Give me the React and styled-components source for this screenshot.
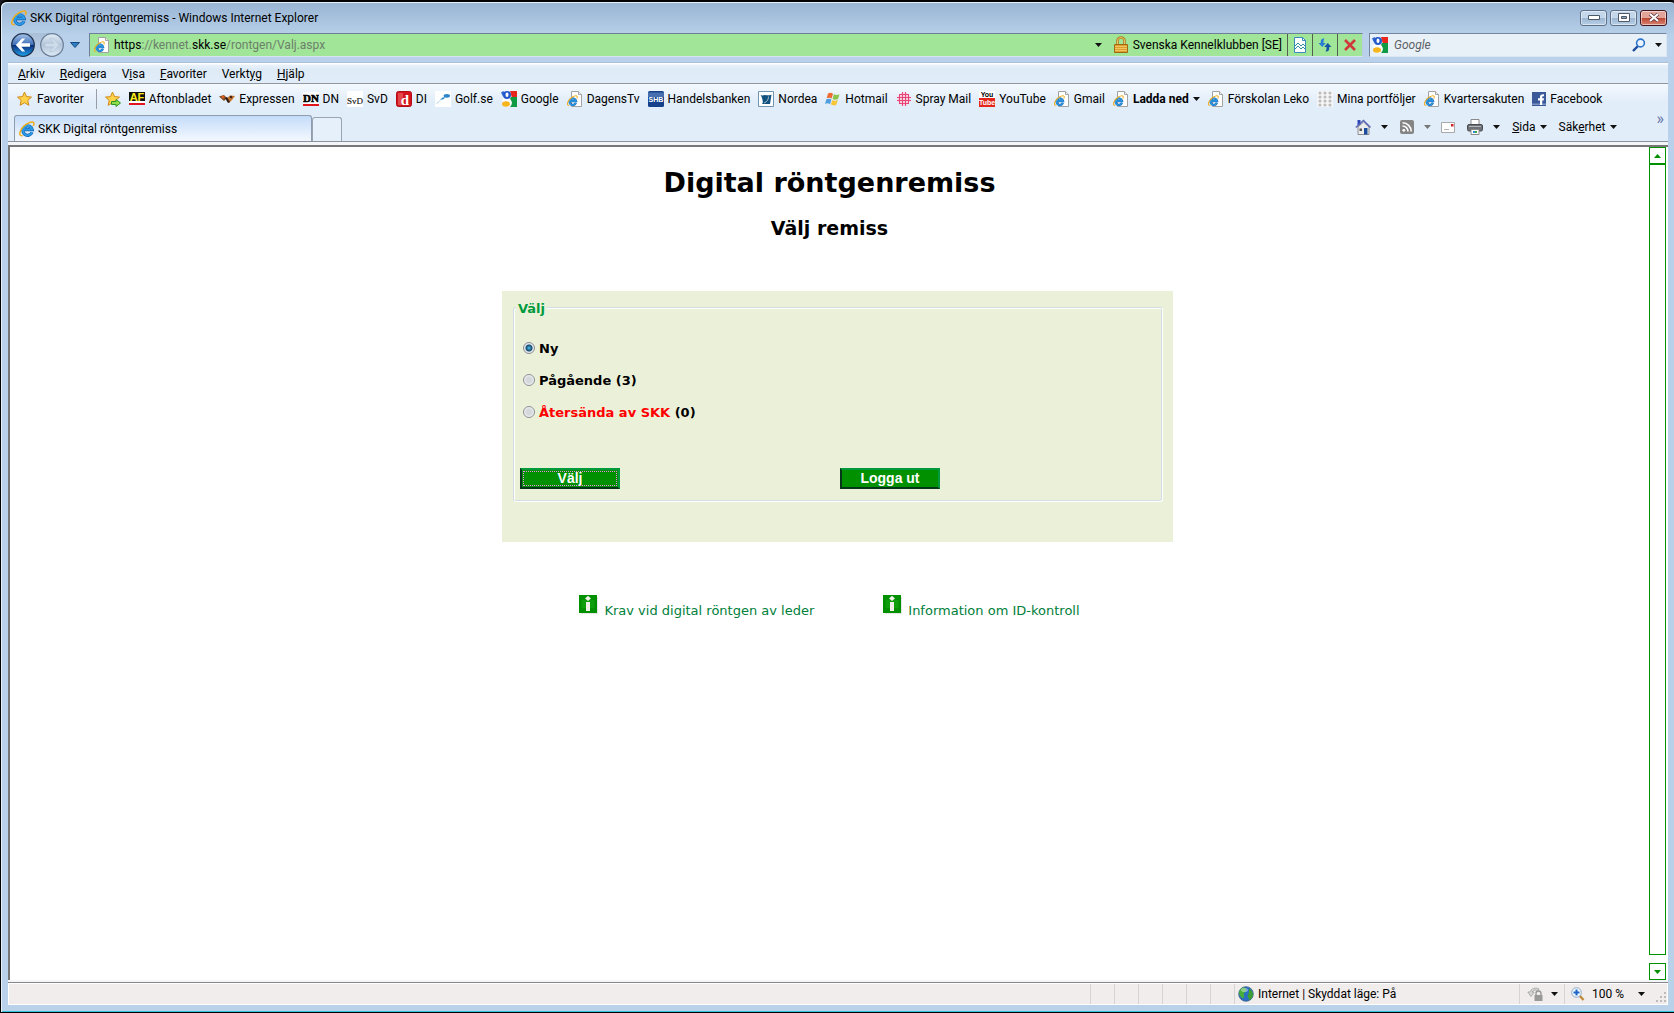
import { useState } from "react";
import styled, { createGlobalStyle } from "styled-components";

const GlobalStyle = createGlobalStyle`
  *, *::before, *::after {
    box-sizing: border-box;
  }
  body {
    margin: 0;
    background: #1c1a22;
    font-family: "Segoe UI", Roboto, "Open Sans", sans-serif;
    font-size: 12px;
    line-height: 16px;
    color: #000;
  }
  button, input {
    font: inherit;
    color: inherit;
    margin: 0;
  }
  svg {
    display: block;
    flex: none;
  }
`;

/* ---------- window frame ---------- */

const Window = styled.div`
  display: flex;
  flex-direction: column;
  min-height: 100vh;
  padding: 1px 6px 7px 7px;
  border: solid #000;
  border-width: 2px 0 1px 1px;
  border-top-left-radius: 7px;
  border-top-right-radius: 4px;
  background: linear-gradient(#98b4d3, #b9d1ea 34px, #bad1ea);
  box-shadow: inset 1px 1px 0 #e6f0fa, inset 0 -1px 0 #35c0dc;
`;

const TitleBar = styled.header`
  display: flex;
  align-items: center;
  height: 27px;
  padding: 2px 1px 0 3px;
  gap: 3px;
`;

const Title = styled.span`
  flex: 1;
`;

const WindowButtons = styled.div`
  display: flex;
  align-items: center;
  gap: 3px;
`;

const WindowButton = styled.button`
  display: flex;
  align-items: center;
  justify-content: center;
  width: 27px;
  height: 16px;
  padding: 0;
  border: 1px solid ${(p) => (p.$close ? "#43141c" : "#5c7089")};
  border-radius: 3px;
  box-shadow: inset 0 0 0 1px rgba(255, 255, 255, 0.5);
  background: ${(p) =>
    p.$close
      ? "linear-gradient(#e2a398 50%, #bb4530 50%, #d98572)"
      : "linear-gradient(#c5d7ea 50%, #9db6d1 50%, #b7cfe6)"};
`;

/* ---------- navigation row ---------- */

const NavRow = styled.nav`
  display: flex;
  align-items: center;
  height: 32px;
  padding: 0 1px 3px 3px;
`;

const NavPill = styled.div`
  display: flex;
  gap: 5px;
  border-radius: 13px;
  background: linear-gradient(#a9bfd8, #c5d7ea);
`;

const IconButton = styled.button`
  display: flex;
  align-items: center;
  justify-content: center;
  padding: 0;
  border: 0;
  background: none;
  width: ${(p) => p.$width || 24}px;
`;

const AddressBar = styled.div`
  display: flex;
  flex: 1;
  align-items: stretch;
  height: 24px;
  margin-left: 3px;
  border: 1px solid #6d8097;
  border-right-color: #b9cce0;
  border-bottom-color: #d5e3f2;
  background: #a1e599;
`;

const Url = styled.div`
  display: flex;
  flex: 1;
  align-items: center;
  gap: 4px;
  padding-left: 4px;
  color: #6c7f69;

  b {
    font-weight: 400;
    color: #000;
  }
`;

const Certificate = styled.button`
  display: flex;
  align-items: center;
  gap: 5px;
  padding: 0 5px 0 7px;
  border: 0;
  background: none;
`;

const AddressAction = styled.button`
  display: flex;
  align-items: center;
  justify-content: center;
  width: 25px;
  padding: 0;
  border: 0;
  border-left: 1px solid #53604f;
  background: none;
`;

const SearchBox = styled.div`
  display: flex;
  align-items: center;
  width: 298px;
  height: 24px;
  margin-left: 6px;
  padding-left: 2px;
  border: 1px solid #73869d;
  border-right-color: #dbe7f3;
  border-bottom-color: #dbe7f3;
  background: #e8f0f8;
`;

const SearchInput = styled.input`
  flex: 1;
  min-width: 0;
  padding: 0 0 0 6px;
  border: 0;
  outline: 0;
  background: none;
  font-style: italic;

  &::placeholder {
    color: #5d6166;
    opacity: 1;
  }
`;

/* ---------- menu, favourites and tabs ---------- */

const MenuBar = styled.div`
  display: flex;
  align-items: center;
  height: 22px;
  padding: 2px 10px 0;
  gap: 15px;
  border-top: 1px solid #a9c0d9;
  border-bottom: 1px solid #9097a0;
  background: linear-gradient(#fff 1px, #e9f2fb 2px, #deebf7 6px, #e1edf9);
`;

const MenuButton = styled.button`
  display: flex;
  align-items: center;
  gap: 4px;
  padding: 0;
  border: 0;
  background: none;
  white-space: pre;
`;

const Tools = styled.div`
  background: linear-gradient(#f4f9fe, #e1edf9 18px);
`;

const FavoritesBar = styled.div`
  display: flex;
  align-items: center;
  height: 31px;
  padding: 0 0 2px 9px;
  gap: 8px;
  white-space: nowrap;
`;

const FavoritesButton = styled(MenuButton)`
  height: 20px;
  padding-right: 12px;
  border-right: 1px solid #999ea6;
`;

const Bookmark = styled.a`
  display: flex;
  align-items: center;
  gap: 4px;
  color: #000;
  font-weight: ${(p) => (p.$bold ? 700 : 400)};
  text-decoration: none;
`;

const TabRow = styled.div`
  display: flex;
  align-items: flex-end;
  height: 27px;
  padding-left: 6px;
  border-bottom: 1px solid #8c93a0;
`;

const Tab = styled.button`
  display: flex;
  align-items: center;
  gap: 3px;
  width: 298px;
  height: 26px;
  padding: 0 4px;
  border: 1px solid #8f9cad;
  border-bottom: 0;
  border-radius: 3px 3px 0 0;
  background: linear-gradient(#c4dcf9, #f4f8fe);
`;

const NewTab = styled.button`
  width: 30px;
  height: 24px;
  padding: 0;
  border: 1px solid #9aa5b3;
  border-bottom: 0;
  border-radius: 3px 3px 0 0;
  background: #e6f0fa;
`;

const CommandBar = styled.div`
  display: flex;
  flex: 1;
  align-items: center;
  justify-content: flex-end;
  height: 26px;
  padding: 0 4px 2px 0;
`;

const CommandGroup = styled.div`
  display: flex;
  align-items: center;
  gap: 10px;
  padding-right: ${(p) => p.$after || 0}px;
`;

const Overflow = styled.button`
  align-self: flex-start;
  padding: 0;
  border: 0;
  background: none;
  color: #6470a8;
  font-size: 16px;
  line-height: 8px;
`;

/* ---------- page ---------- */

const Content = styled.div`
  display: flex;
  flex: 1;
  padding: 3px 0;
  background: #f3f5f9;
`;

const Viewport = styled.main`
  display: flex;
  flex: 1;
  border: solid #777;
  border-width: 2px 0 0 2px;
  background: #fff;
`;

const Page = styled.div`
  display: flex;
  flex: 1;
  flex-direction: column;
  align-items: center;
  font-family: Verdana, "DejaVu Sans", sans-serif;
  font-size: 13px;
`;

const PageTitle = styled.h1`
  margin: 19px 0 0;
  font-size: 27px;
  line-height: 34px;
`;

const PageSubtitle = styled.h2`
  margin: 16px 0 0;
  font-size: 19px;
  line-height: 24px;
`;

const Form = styled.form`
  width: 671px;
  height: 251px;
  margin: 51px 0 0 16px;
  padding: 7px 10px 0 11px;
  background: #ebf1d9;
`;

const Group = styled.fieldset`
  height: 204px;
  margin: 0;
  padding: 0 6px;
  border: 1px solid;
  border-color: #d3dce6 #fff #fff #d3dce6;
  border-radius: 3px;
  box-shadow: inset 1px 1px 0 #fff, inset -1px -1px 0 #d3dce6;
  font-weight: 700;
`;

const Legend = styled.legend`
  margin-left: -4px;
  padding: 3px 2px 0;
  background: #ebf1d9;
  line-height: 16px;
  color: #009a3d;
`;

const Choice = styled.label`
  display: flex;
  align-items: center;
  gap: 4px;
  height: 32px;
  padding-left: 3px;
`;

const Choices = styled.div`
  padding-top: 16px;
`;

const Radio = styled.input`
  appearance: none;
  width: 12px;
  height: 12px;
  margin-bottom: 3px;
  border: 1px solid #8a8f94;
  border-radius: 50%;
  background: radial-gradient(#d5d8dc 40%, #f7f7f7 75%);

  &:checked {
    background: radial-gradient(circle at 50% 50%, #4fc0ea 0, #14486e 3px, #e4e8ec 4px);
  }
`;

const Warn = styled.span`
  color: #f00;
`;

const Buttons = styled.div`
  display: flex;
  gap: 220px;
  padding-top: 39px;
`;

const GreenButton = styled.button`
  width: 100px;
  height: 21px;
  padding: 0;
  border: 2px solid;
  border-color: #009a3d #009a3d #04371a #04371a;
  background: #009000;
  color: #fff;
  font: 700 14px/17px Arial, "Liberation Sans", sans-serif;
  outline: ${(p) => (p.$focused ? "1px dotted #e58be5" : "0")};
  outline-offset: -4px;
`;

const Links = styled.div`
  display: flex;
  gap: 69px;
  margin-top: 53px;
`;

const InfoLink = styled.a`
  display: flex;
  gap: 6px;
  color: #00803a;
  line-height: 32px;
  text-decoration: none;
`;

const ScrollBar = styled.div`
  display: flex;
  flex-direction: column;
  width: 17px;
  margin-right: 2px;
`;

const ScrollButton = styled.button`
  display: flex;
  align-items: center;
  justify-content: center;
  height: 17px;
  padding: 0;
  border: 1px solid #009000;
  background: #fff;
`;

const ScrollThumb = styled.div`
  flex: 1;
  margin-bottom: 8px;
  border: 1px solid #009000;
`;

/* ---------- status bar ---------- */

const StatusBar = styled.footer`
  display: flex;
  justify-content: flex-end;
  height: 22px;
  border: 1px solid #fff;
  background: #f0edec;
  box-shadow: 0 -1px 0 #86868a;
`;

const StatusCell = styled.div`
  display: flex;
  align-items: center;
  width: ${(p) => p.$width || 24}px;
  padding-left: 3px;
  gap: 4px;
  border-left: 1px solid #d6d3d2;
`;

const StatusText = styled.span`
  flex: 1;
`;

/* ---------- icons ---------- */

const Arrow = ({ color = "#111", up }) => (
  <svg width="7" height="4" viewBox="0 0 7 4">
    <path d={up ? "M0 4h7L3.500 0z" : "M0 0h7L3.500 4z"} fill={color} />
  </svg>
);

const ELogo = () => (
  <>
    <path
      d="M13 11.200A4.700 4.700 0 1 1 13.200 8.600H5"
      fill="none"
      stroke="#1560ad"
      strokeWidth="3.200"
    />
    <path
      d="M13 11.200A4.700 4.700 0 1 1 13.200 8.600H5"
      fill="none"
      stroke="#2b9ae6"
      strokeWidth="2"
    />
    <path
      d="M3.600 14.600C-1.500 15.800.8 7.500 7.500 3.200 12.500 0 16.500 0 14.300 5"
      fill="none"
      stroke="#f0ad1c"
      strokeWidth="1.500"
    />
  </>
);

const IeIcon = () => (
  <svg width="16" height="16" viewBox="0 0 16 16">
    <ELogo />
  </svg>
);

const IePageIcon = () => (
  <svg width="16" height="16" viewBox="0 0 16 16">
    <path d="M4.500.5h7l3 3v12h-10z" fill="#fff" stroke="#a2a2a2" />
    <path d="M11.500.5v3h3" fill="#eee" stroke="#a2a2a2" />
    <g transform="translate(-.2 4) scale(.7)">
      <ELogo />
    </g>
  </svg>
);

const BackIcon = () => (
  <svg width="24" height="24" viewBox="0 0 24 24">
    <defs>
      <linearGradient id="back" x2="0" y2="1">
        <stop offset="0" stopColor="#a7c4ea" />
        <stop offset=".48" stopColor="#3d6fb8" />
        <stop offset=".5" stopColor="#0b2b78" />
        <stop offset="1" stopColor="#1fa4ee" />
      </linearGradient>
    </defs>
    <circle cx="12" cy="12" r="11.300" fill="url(#back)" stroke="#22344f" strokeWidth="1.200" />
    <path d="M11 5.500 4.800 12l6.200 6.500h3.200L10.300 13.800H19v-3.600h-8.700L14.200 5.500z" fill="#fff" />
  </svg>
);

const ForwardIcon = () => (
  <svg width="24" height="24" viewBox="0 0 24 24">
    <defs>
      <linearGradient id="forward" x2="0" y2="1">
        <stop offset="0" stopColor="#e3ecf6" />
        <stop offset=".5" stopColor="#b3c5da" />
        <stop offset="1" stopColor="#dfeaf5" />
      </linearGradient>
    </defs>
    <circle cx="12" cy="12" r="11.300" fill="url(#forward)" stroke="#6b7f98" strokeWidth="1.200" />
    <path
      d="m13 5.500 6.200 6.500-6.200 6.500H9.800l3.900-4.700H5v-3.600h8.700L9.800 5.500z"
      fill="#cfdcea"
      stroke="#b2c3d7"
      strokeWidth=".6"
    />
  </svg>
);

const DropIcon = () => (
  <svg width="10" height="6" viewBox="0 0 10 6">
    <path d="M.5.5h9L5 5.500z" fill="#2f7fc4" stroke="#174a80" />
  </svg>
);

const LockIcon = () => (
  <svg width="14" height="18" viewBox="0 0 14 18">
    <path d="M3.500 9V5a3.500 3.500 0 0 1 7 0v4" fill="none" stroke="#a77a1e" strokeWidth="2.600" />
    <path d="M3.500 9V5a3.500 3.500 0 0 1 7 0v4" fill="none" stroke="#eccb6a" strokeWidth="1" />
    <path d="M.5 8.500h13v8H.5z" fill="#dc9f2c" stroke="#a06a14" />
    <path d="M1 10.500h12M1 12.500h12M1 14.500h12" stroke="#f0c463" />
  </svg>
);

const CompatIcon = () => (
  <svg width="12" height="16" viewBox="0 0 12 16">
    <path d="M.5.5h8l3 3v12H.5z" fill="#fff" stroke="#3a8ac0" />
    <path d="M8.500.5v3h3" fill="none" stroke="#3a8ac0" />
    <path d="m1 9 3-3 3 3 2-2 2 2M1 12l3-3 3 3 2-2 2 2" fill="none" stroke="#2f8f9e" />
  </svg>
);

const RefreshIcon = () => (
  <svg width="14" height="16" viewBox="0 0 14 16">
    <path d="M6.500 1.500C2.800 1.500 2.800 3 2.800 6H.5l3.700 4 3.600-4H5.500c0-2 0-3 1-4.500z" fill="#2a7fd4" />
    <path d="M7.500 14.500c3.700 0 3.700-1.500 3.700-4.500h2.300L9.800 6 6.200 10h2.300c0 2 0 3-1 4.500z" fill="#1554a3" />
  </svg>
);

const StopIcon = () => (
  <svg width="12" height="12" viewBox="0 0 12 12">
    <path d="m1 1 10 10M11 1 1 11" stroke="#d0393c" strokeWidth="2.600" />
  </svg>
);

const GoogleIcon = () => (
  <svg width="16" height="16" viewBox="0 0 16 16">
    <path d="M3 6h6l3 5-4 5H4L1 9z" fill="#fff" />
    <path d="M9 0h7v7h-5z" fill="#e8261c" />
    <path d="M10 6h6v10H9c3-3 2-6 0-8z" fill="#109a43" />
    <path d="M0 1.500 2.500 0 4 3 2 5.500z" fill="#2b68d8" />
    <ellipse cx="6" cy="4" rx="4" ry="4" fill="#2558c8" />
    <ellipse cx="6" cy="3.800" rx="1.500" ry="2.300" fill="#fff" />
    <ellipse cx="5" cy="13" rx="4" ry="2.700" fill="#f7b51c" />
  </svg>
);

const SearchIcon = () => (
  <svg width="14" height="14" viewBox="0 0 14 14">
    <path d="M1 13 6 8" stroke="#1c4c9c" strokeWidth="2.400" />
    <circle cx="8.500" cy="5" r="3.900" fill="#e9f4ff" stroke="#2d74cc" strokeWidth="1.600" />
  </svg>
);

const Star = () => (
  <path
    d="m7.500 1 2 4.600 5 .5-3.700 3.300 1.100 4.900-4.400-2.600-4.400 2.600 1.100-4.900L.5 6.100l5-.5z"
    fill="#ffd24a"
    stroke="#d08a1b"
    strokeLinejoin="round"
  />
);

const StarIcon = () => (
  <svg width="16" height="16" viewBox="0 0 16 16">
    <Star />
  </svg>
);

const StarAddIcon = () => (
  <svg width="16" height="16" viewBox="0 0 16 16">
    <Star />
    <path d="M6.500 10.500h4.500v-2l4.500 3.500-4.500 3.500v-2h-4.500z" fill="#8ede4e" stroke="#2f9420" />
  </svg>
);

const AfIcon = () => (
  <svg width="16" height="16" viewBox="0 0 16 16">
    <path d="M0 1h16v9H0z" fill="#111" />
    <path d="M0 10h16v2H0z" fill="#fff" />
    <path d="M0 13h16" stroke="#e1141c" strokeWidth="2" />
    <text
      x="8"
      y="10"
      fill="#ffec1c"
      fontSize="11"
      fontWeight="700"
      fontFamily="Liberation Sans, sans-serif"
      textAnchor="middle"
    >
      AF
    </text>
  </svg>
);

const WaspIcon = () => (
  <svg width="16" height="16" viewBox="0 0 16 16">
    <path d="M0 5.500 5 4l3 3-3 3z" fill="#7d4a21" />
    <path d="M16 5 11 4.500 7 8l3 4 3-3z" fill="#c9752d" />
    <path d="m6 7 3 5 2-1-3-5z" fill="#2d1d14" />
    <circle cx="4" cy="6" r="1.500" fill="#e05d22" />
    <circle cx="12" cy="6" r="1.300" fill="#3c2418" />
  </svg>
);

const DnIcon = () => (
  <svg width="16" height="16" viewBox="0 0 16 16">
    <path d="M0 1h16v14H0z" fill="#fff" />
    <path d="M0 14h16" stroke="#e1141c" strokeWidth="2" />
    <text
      x="8"
      y="11"
      fontSize="11"
      fontWeight="700"
      fontFamily="Liberation Serif, serif"
      textAnchor="middle"
      stroke="#000"
      strokeWidth=".6"
    >
      DN
    </text>
  </svg>
);

const SvdIcon = () => (
  <svg width="16" height="16" viewBox="0 0 16 16">
    <path d="M0 0h16v16H0z" fill="#fff" />
    <text
      x="8"
      y="13"
      fill="#222"
      fontSize="9"
      fontFamily="Liberation Serif, serif"
      textAnchor="middle"
      stroke="#222"
      strokeWidth=".2"
    >
      SvD
    </text>
  </svg>
);

const DiIcon = () => (
  <svg width="16" height="16" viewBox="0 0 16 16">
    <rect x=".5" y=".5" width="15" height="15" rx="2" fill="#d5151d" stroke="#b20d14" />
    <path d="M2 2h5v12H2z" fill="#f07a78" opacity=".5" />
    <text
      x="9"
      y="13.500"
      fill="#fff"
      fontSize="15"
      fontWeight="700"
      fontFamily="Liberation Serif, serif"
      textAnchor="middle"
    >
      d
    </text>
  </svg>
);

const GolfIcon = () => (
  <svg width="16" height="16" viewBox="0 0 16 16">
    <path d="M0 0h16v16H0z" fill="#fff" />
    <path d="M1 12.500c3-1 4-4 6-5.500 1-1 2-1 3-.5-1 2.500-4 1.500-5 3-1 1.600-2 2.700-4 3z" fill="#2a86c8" />
    <ellipse cx="11.800" cy="4.800" rx="3.200" ry="1.900" fill="#2a86c8" />
  </svg>
);

const ShbIcon = () => (
  <svg width="16" height="16" viewBox="0 0 16 16">
    <rect width="16" height="16" rx="1.500" fill="#17408c" />
    <path d="M0 1.500h16V6H0z" fill="#5d83bd" opacity=".7" />
    <text
      x="8"
      y="11"
      fill="#fff"
      fontSize="7"
      fontWeight="700"
      fontFamily="Liberation Sans, sans-serif"
      textAnchor="middle"
    >
      SHB
    </text>
  </svg>
);

const NordeaIcon = () => (
  <svg width="16" height="16" viewBox="0 0 16 16">
    <path d="M.5.5h15v15H.5z" fill="#fff" stroke="#6f95b5" />
    <path d="M2.500 4c2 1 3 0 4.500 0s4 1 6.500-.5L12 13H4c1-1 1-2 .5-4-.3-2-.8-3-2-5z" fill="#11517f" />
    <path d="M10.500 5.500C10.500 8.500 9 11 6 12" fill="none" stroke="#fff" strokeWidth=".6" />
  </svg>
);

const WindowsIcon = () => (
  <svg width="16" height="16" viewBox="0 0 16 16">
    <path d="M3 2.500c2-1 3.500-.8 5 .2L6.700 7.500c-1.500-1-3-1.200-5-.3z" fill="#ee6b35" />
    <path d="M8.800 3.200c2 1 3.700 1 5.700 0L13 8c-2 1-3.500.9-5.400-.1z" fill="#8cc34c" />
    <path d="M1.400 8.300c2-1 3.500-.8 5 .2L5 13.200c-1.500-1-3-1.200-5-.3z" fill="#4f9fe0" />
    <path d="M7.300 9c2 1 3.500 1 5.500 0l-1.400 4.700c-2 1-3.500.9-5.500-.1z" fill="#f7c63a" />
  </svg>
);

const SprayIcon = () => (
  <svg width="16" height="16" viewBox="0 0 16 16">
    <circle cx="8" cy="8" r="6.500" fill="#f9cfdc" />
    <path
      d="M3.500 3v10M6.500 1v14M9.500 1v14M12.500 3v10M3 3.500h10M1 6.500h14M1 9.500h14M3 12.500h10"
      stroke="#e5467a"
    />
  </svg>
);

const YouTubeIcon = () => (
  <svg width="16" height="16" viewBox="0 0 16 16">
    <path d="M0 0h16v7H0z" fill="#fff" />
    <path d="M0 7h16v9H0z" fill="#e5241b" />
    <g fontSize="7" fontWeight="700" fontFamily="Liberation Sans, sans-serif" textAnchor="middle">
      <text x="8" y="6">You</text>
      <text x="8" y="14" fill="#fff">Tube</text>
    </g>
  </svg>
);

const DotsIcon = () => (
  <svg width="16" height="16" viewBox="0 0 16 16">
    <path d="M0 0h16v16H0z" fill="#f6f6f6" />
    {[2, 6, 10, 14].map((y) =>
      [3, 8, 13].map((x) => <circle key={`${x}-${y}`} cx={x} cy={y} r="1.600" fill="#bdbdbd" />)
    )}
  </svg>
);

const FacebookIcon = () => (
  <svg width="14" height="14" viewBox="0 0 14 14">
    <path d="M0 0h14v14H0z" fill="#3b5998" />
    <path d="M0 11.500h14V13H0z" fill="#7d93c4" />
    <path d="M8 13V8.500H6V6.300h2V4.800C8 2.800 9.200 2 12 2.200v2.100c-1.500-.1-1.800.2-1.800 1v1H12l-.3 2.200h-1.500V13z" fill="#fff" />
  </svg>
);

const HomeIcon = () => (
  <svg width="16" height="16" viewBox="0 0 16 16">
    <path d="M2.500 1h3v5h-3z" fill="#2f46b4" />
    <path d="M3 8v7.500h11V8L8.500 3z" fill="#ececec" stroke="#777" strokeWidth=".8" />
    <path d="m.8 8.500 7.700-7 7 7" fill="none" stroke="#5a65b8" strokeWidth="1.500" />
    <path d="M9 9h3.500v6.500H9z" fill="#1a4c9e" />
    <path d="M4.500 9.500h2.500V12H4.500z" fill="#555" />
  </svg>
);

const RssIcon = () => (
  <svg width="14" height="14" viewBox="0 0 14 14">
    <rect width="14" height="14" rx="2" fill="#858585" />
    <circle cx="3.800" cy="10.300" r="1.400" fill="#fff" />
    <path d="M2.500 6a5.500 5.500 0 0 1 5.500 5.500M2.500 2.800a8.700 8.700 0 0 1 8.700 8.700" fill="none" stroke="#fff" strokeWidth="1.600" />
  </svg>
);

const MailIcon = () => (
  <svg width="14" height="11" viewBox="0 0 14 11">
    <path d="M.5.5h13v10H.5z" fill="#fdfdfd" stroke="#a8a8a8" />
    <path d="M10 2h2.500v2.500H10z" fill="#d3232a" />
    <path d="M3 7.500h5" stroke="#b5b5b5" />
  </svg>
);

const PrintIcon = () => (
  <svg width="16" height="16" viewBox="0 0 16 16">
    <path d="M4 .5h8V6H4z" fill="#fff" stroke="#8a8a8a" />
    <rect x=".5" y="5.500" width="15" height="6.500" rx="1.500" fill="#6d7075" stroke="#4b4d50" />
    <path d="M2 7.500h12" stroke="#b4b7bb" />
    <path d="M4 10.500h8v5H4z" fill="#fff" stroke="#8a8a8a" />
    <path d="M6 13h2" stroke="#2b8ed0" strokeWidth="2" />
    <path d="M8 13h2" stroke="#3aa845" strokeWidth="2" />
  </svg>
);

const InfoIcon = () => (
  <svg width="19" height="19" viewBox="0 0 19 19">
    <path d="M2 2h17v17H2z" fill="#e6e6e6" />
    <path d="M0 0h18v18H0z" fill="#009000" />
    <path d="M2.500 5h13v8h-13z" fill="#0e9e0e" />
    <path d="m9 .8 3 2.700-3 2.500-3-2.500z" fill="#f1f1e9" />
    <path d="M7 7h4v9H7z" fill="#f1f1e9" />
  </svg>
);

const GlobeIcon = () => (
  <svg width="16" height="16" viewBox="0 0 16 16">
    <circle cx="8" cy="8" r="7.300" fill="#2a6fc4" stroke="#3c5f86" strokeWidth=".8" />
    <path d="M4 2c3-1 4 0 4 2S5 7 6 9s-1 4-2 3-3-3-3-5 1-4 3-5z" fill="#49ad3c" />
    <path d="M11 2.500c2 1 4 3 4 6s-2 5-4 5.500c0-2-2-3-1-5s1-4 1-6.500z" fill="#3d9e37" />
    <ellipse cx="6.500" cy="4" rx="3.500" ry="2" fill="#fff" opacity=".4" />
  </svg>
);

const ProtectIcon = () => (
  <svg width="16" height="16" viewBox="0 0 16 16">
    <path d="M12 3A6 6 0 0 0 3 6H.8l3.200 4.500L7.200 6H5a4 4 0 0 1 6-1z" fill="#d6d6d6" stroke="#999" strokeWidth=".7" />
    <path d="M9 9V7.500a2.500 2.500 0 0 1 5 0V9" fill="none" stroke="#999" strokeWidth="1.400" />
    <path d="M7.500 9h8v6h-8z" fill="#999" />
  </svg>
);

const ZoomIcon = () => (
  <svg width="14" height="14" viewBox="0 0 14 14">
    <path d="m8.500 8.500 4 4.500" stroke="#c08a3a" strokeWidth="2.400" />
    <circle cx="5.500" cy="5.500" r="4.800" fill="#f4faff" stroke="#8ea9c4" />
    <path d="M5.500 2.500v6M2.500 5.500h6" stroke="#1d66c8" strokeWidth="2" />
  </svg>
);

const GripIcon = () => (
  <svg width="18" height="18" viewBox="-6 -6 18 18">
    <path d="M9 1h2v2H9zM9 5h2v2H9zM5 5h2v2H5zM9 9h2v2H9zM5 9h2v2H5zM1 9h2v2H1z" fill="#bdbab9" />
  </svg>
);

/* ---------- content ---------- */

const menus = [
  ["", "A", "rkiv"],
  ["", "R", "edigera"],
  ["V", "i", "sa"],
  ["", "F", "avoriter"],
  ["Verkt", "y", "g"],
  ["", "H", "jälp"],
];

const bookmarks = [
  { name: "Aftonbladet", Icon: AfIcon },
  { name: "Expressen", Icon: WaspIcon },
  { name: "DN", Icon: DnIcon },
  { name: "SvD", Icon: SvdIcon },
  { name: "DI", Icon: DiIcon },
  { name: "Golf.se", Icon: GolfIcon },
  { name: "Google", Icon: GoogleIcon },
  { name: "DagensTv", Icon: IePageIcon },
  { name: "Handelsbanken", Icon: ShbIcon },
  { name: "Nordea", Icon: NordeaIcon },
  { name: "Hotmail", Icon: WindowsIcon },
  { name: "Spray Mail", Icon: SprayIcon },
  { name: "YouTube", Icon: YouTubeIcon },
  { name: "Gmail", Icon: IePageIcon },
  { name: "Ladda ned", Icon: IePageIcon, folder: true },
  { name: "Förskolan Leko", Icon: IePageIcon },
  { name: "Mina portföljer", Icon: DotsIcon },
  { name: "Kvartersakuten", Icon: IePageIcon },
  { name: "Facebook", Icon: FacebookIcon },
];

const MenuLabel = ({ parts: [before, key, after] }) => (
  <span>
    {before}
    <u>{key}</u>
    {after}
  </span>
);

const Chrome = () => (
  <>
    <TitleBar>
      <IeIcon />
      <Title>SKK Digital röntgenremiss - Windows Internet Explorer</Title>
      <WindowButtons>
        <WindowButton aria-label="Minimera">
          <svg width="12" height="5" viewBox="0 0 12 5">
            <path d="M.5.5h11v4H.5z" fill="#fff" stroke="#4c5866" />
          </svg>
        </WindowButton>
        <WindowButton aria-label="Maximera">
          <svg width="12" height="9" viewBox="0 0 12 9">
            <path d="M.5.5h11v8H.5z" fill="#fff" stroke="#4c5866" />
            <path d="M3.500 3.500h5v2h-5z" fill="#8ea5bf" stroke="#4c5866" />
          </svg>
        </WindowButton>
        <WindowButton $close aria-label="Stäng">
          <svg width="12" height="9" viewBox="0 0 12 9">
            <path d="m2 1 8 7M10 1 2 8" stroke="#5a3340" strokeWidth="3.600" />
            <path d="m2 1 8 7M10 1 2 8" stroke="#fff" strokeWidth="2.200" />
          </svg>
        </WindowButton>
      </WindowButtons>
    </TitleBar>

    <NavRow>
      <NavPill>
        <IconButton aria-label="Bakåt">
          <BackIcon />
        </IconButton>
        <IconButton aria-label="Framåt">
          <ForwardIcon />
        </IconButton>
      </NavPill>
      <IconButton $width={22} aria-label="Senaste sidor">
        <DropIcon />
      </IconButton>
      <AddressBar>
        <Url role="textbox" aria-label="Adress">
          <IePageIcon />
          <span>
            <b>https</b>://kennet.<b>skk.se</b>/rontgen/Valj.aspx
          </span>
        </Url>
        <IconButton $width={16} aria-label="Visa adresser">
          <Arrow />
        </IconButton>
        <Certificate>
          <LockIcon />
          Svenska Kennelklubben [SE]
        </Certificate>
        <AddressAction aria-label="Kompatibilitetsvy">
          <CompatIcon />
        </AddressAction>
        <AddressAction aria-label="Uppdatera">
          <RefreshIcon />
        </AddressAction>
        <AddressAction aria-label="Stoppa">
          <StopIcon />
        </AddressAction>
      </AddressBar>
      <SearchBox>
        <GoogleIcon />
        <SearchInput aria-label="Sök" placeholder="Google" />
        <IconButton $width={22} aria-label="Sök nu">
          <SearchIcon />
        </IconButton>
        <IconButton $width={16} aria-label="Sökalternativ">
          <Arrow />
        </IconButton>
      </SearchBox>
    </NavRow>

    <MenuBar>
      {menus.map((parts) => (
        <MenuButton key={parts.join("")}>
          <MenuLabel parts={parts} />
        </MenuButton>
      ))}
    </MenuBar>

    <Tools>
      <FavoritesBar>
        <FavoritesButton>
          <StarIcon />
          Favoriter
        </FavoritesButton>
        <IconButton $width={16} aria-label="Lägg till i Favoriter">
          <StarAddIcon />
        </IconButton>
        {bookmarks.map(({ name, Icon, folder }) => (
          <Bookmark key={name} href="#" $bold={folder}>
            <Icon />
            {name}
            {folder && <Arrow />}
          </Bookmark>
        ))}
      </FavoritesBar>
      <TabRow>
        <Tab>
          <IeIcon />
          SKK Digital röntgenremiss
        </Tab>
        <NewTab aria-label="Ny flik" />
        <CommandBar>
          <CommandGroup $after={12}>
            <HomeIcon />
            <Arrow />
          </CommandGroup>
          <CommandGroup $after={10}>
            <RssIcon />
            <Arrow color="#777" />
          </CommandGroup>
          <CommandGroup $after={12}>
            <MailIcon />
          </CommandGroup>
          <CommandGroup $after={12}>
            <PrintIcon />
            <Arrow />
          </CommandGroup>
          <CommandGroup $after={12}>
            <MenuButton>
              <MenuLabel parts={["", "S", "ida"]} />
              <Arrow />
            </MenuButton>
          </CommandGroup>
          <CommandGroup $after={40}>
            <MenuButton>
              <MenuLabel parts={["Säk", "e", "rhet"]} />
              <Arrow />
            </MenuButton>
          </CommandGroup>
          <Overflow aria-label="Fler verktyg">»</Overflow>
        </CommandBar>
      </TabRow>
    </Tools>
  </>
);

const Remiss = () => {
  const [choice, setChoice] = useState("ny");
  const radio = (value) => (
    <Radio
      type="radio"
      name="remiss"
      value={value}
      checked={choice === value}
      onChange={() => setChoice(value)}
    />
  );

  return (
    <Page>
      <PageTitle>Digital röntgenremiss</PageTitle>
      <PageSubtitle>Välj remiss</PageSubtitle>
      <Form onSubmit={(e) => e.preventDefault()}>
        <Group>
          <Legend>Välj</Legend>
          <Choices>
            <Choice>
              {radio("ny")}
              Ny
            </Choice>
            <Choice>
              {radio("pagaende")}
              Pågående (3)
            </Choice>
            <Choice>
              {radio("atersanda")}
              <span>
                <Warn>Återsända av SKK</Warn> (0)
              </span>
            </Choice>
          </Choices>
          <Buttons>
            <GreenButton $focused>Välj</GreenButton>
            <GreenButton type="button">Logga ut</GreenButton>
          </Buttons>
        </Group>
      </Form>
      <Links>
        <InfoLink href="#">
          <InfoIcon />
          Krav vid digital röntgen av leder
        </InfoLink>
        <InfoLink href="#">
          <InfoIcon />
          Information om ID-kontroll
        </InfoLink>
      </Links>
    </Page>
  );
};

export default function App() {
  return (
    <Window>
      <GlobalStyle />
      <Chrome />
      <Content>
        <Viewport>
          <Remiss />
          <ScrollBar>
            <ScrollButton aria-label="Rulla upp">
              <Arrow color="#009000" up />
            </ScrollButton>
            <ScrollThumb />
            <ScrollButton aria-label="Rulla ned">
              <Arrow color="#009000" />
            </ScrollButton>
          </ScrollBar>
        </Viewport>
      </Content>
      <StatusBar>
        {[1, 2, 3, 4, 5, 6].map((n) => (
          <StatusCell key={n} />
        ))}
        <StatusCell $width={285}>
          <GlobeIcon />
          Internet | Skyddat läge: På
        </StatusCell>
        <StatusCell $width={45}>
          <IconButton aria-label="Skyddat läge">
            <ProtectIcon />
          </IconButton>
          <Arrow />
        </StatusCell>
        <StatusCell $width={103}>
          <IconButton $width={20} aria-label="Zooma">
            <ZoomIcon />
          </IconButton>
          <StatusText>100 %</StatusText>
          <Arrow />
          <GripIcon />
        </StatusCell>
      </StatusBar>
    </Window>
  );
}
